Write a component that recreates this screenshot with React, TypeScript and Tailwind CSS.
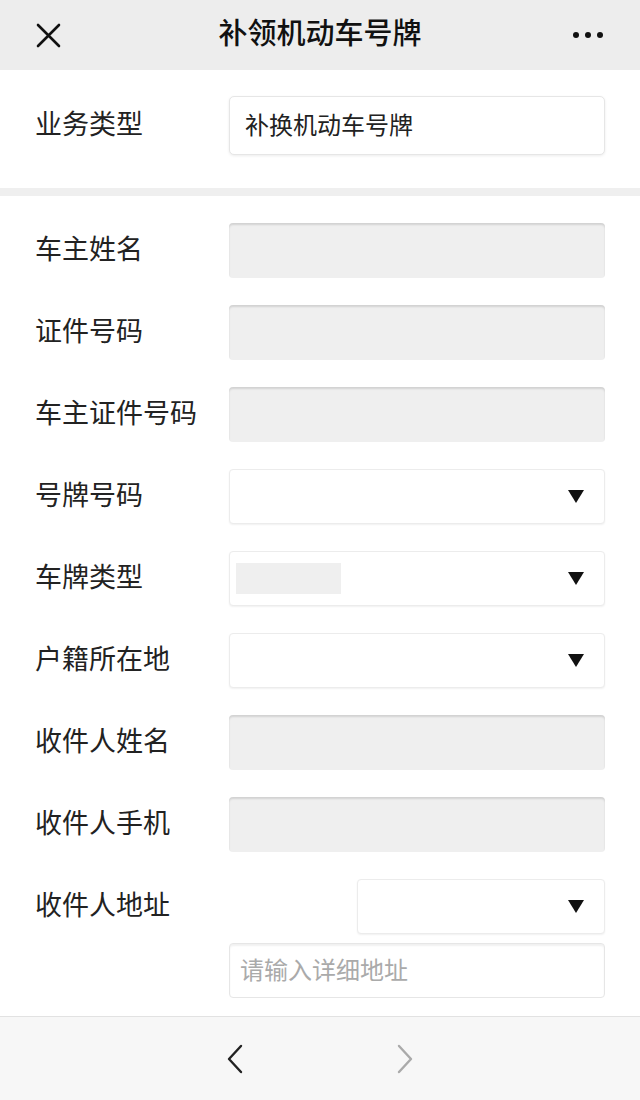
const FONT = "font-['Liberation_Sans','Noto_Sans_CJK_SC',sans-serif]";

function Caret() {
  return (
    <svg width="16" height="13" viewBox="0 0 16 13" className="shrink-0">
      <polygon points="0,0 16,0 8,13" fill="#111" />
    </svg>
  );
}

function GrayInput() {
  return <div className="h-[55px] w-[376px] rounded-[4px] bg-[#efefef] shadow-[inset_0_2px_2px_rgba(0,0,0,0.12)]" />;
}

function SelectBox({ children, width = 'w-[376px]' }: { children?: React.ReactNode; width?: string }) {
  return (
    <div className={`h-[55px] ${width} rounded-[4px] border border-[#ececec] bg-white shadow-[0_1px_2px_rgba(0,0,0,0.06)] flex items-center justify-between pl-[6px] pr-[20px]`}>
      <div className="flex-1">{children}</div>
      <Caret />
    </div>
  );
}

function Row({ label, children }: { label: string; children: React.ReactNode }) {
  return (
    <div className="flex items-center">
      <div className="w-[194px] text-[27px] leading-none text-[#222]">{label}</div>
      {children}
    </div>
  );
}

export default function App() {
  return (
    <div className={`w-[640px] h-[1100px] bg-white flex flex-col ${FONT}`}>
      {/* 顶部导航 */}
      <div className="h-[70px] bg-[#ededed] flex items-center justify-between px-[36px] relative">
        <svg width="25" height="25" viewBox="0 0 25 25">
          <path d="M2 2 L23 23 M23 2 L2 23" stroke="#111" strokeWidth="2.6" strokeLinecap="round" />
        </svg>
        <div className="absolute left-0 right-0 text-center text-[29px] font-medium text-[#111] pointer-events-none">补领机动车号牌</div>
        <svg width="32" height="8" viewBox="0 0 32 8">
          <circle cx="4" cy="4" r="3" fill="#111" />
          <circle cx="16" cy="4" r="3" fill="#111" />
          <circle cx="28" cy="4" r="3" fill="#111" />
        </svg>
      </div>

      {/* 业务类型 */}
      <div className="pt-[26px] pb-[33px] pl-[35px]">
        <Row label="业务类型">
          <div className="h-[59px] w-[376px] rounded-[5px] border border-[#e6e6e6] bg-white shadow-[0_1px_3px_rgba(0,0,0,0.08)] flex items-center pl-[15px] text-[24px] text-[#222]">
            补换机动车号牌
          </div>
        </Row>
      </div>

      <div className="h-[8px] bg-[#efefef]" />

      {/* 表单 */}
      <div className="flex-1 flex flex-col gap-[27px] pt-[27px] pl-[35px]">
        <Row label="车主姓名"><GrayInput /></Row>
        <Row label="证件号码"><GrayInput /></Row>
        <Row label="车主证件号码"><GrayInput /></Row>
        <Row label="号牌号码"><SelectBox /></Row>
        <Row label="车牌类型">
          <SelectBox>
            <div className="h-[31px] w-[105px] bg-[#efefef]" />
          </SelectBox>
        </Row>
        <Row label="户籍所在地"><SelectBox /></Row>
        <Row label="收件人姓名"><GrayInput /></Row>
        <Row label="收件人手机"><GrayInput /></Row>
        <div className="flex flex-col gap-[9px]">
          <Row label="收件人地址">
            <div className="w-[376px] flex justify-end">
              <SelectBox width="w-[248px]" />
            </div>
          </Row>
          <div className="pl-[194px]">
            <div className="h-[55px] w-[376px] rounded-[4px] border border-[#e6e6e6] bg-white shadow-[inset_0_2px_2px_rgba(0,0,0,0.06)] flex items-center pl-[10px] text-[24px] text-[#aaa]">
              请输入详细地址
            </div>
          </div>
        </div>
      </div>

      {/* 底部 */}
      <div className="h-[84px] bg-[#f7f7f7] border-t border-[#e2e2e2] flex items-center justify-center gap-[152px]">
        <svg width="18" height="30" viewBox="0 0 18 30">
          <path d="M15 2 L3 15 L15 28" stroke="#222" strokeWidth="2.4" fill="none" strokeLinecap="round" strokeLinejoin="round" />
        </svg>
        <svg width="18" height="30" viewBox="0 0 18 30">
          <path d="M3 2 L15 15 L3 28" stroke="#aaa" strokeWidth="2.4" fill="none" strokeLinecap="round" strokeLinejoin="round" />
        </svg>
      </div>
    </div>
  );
}
